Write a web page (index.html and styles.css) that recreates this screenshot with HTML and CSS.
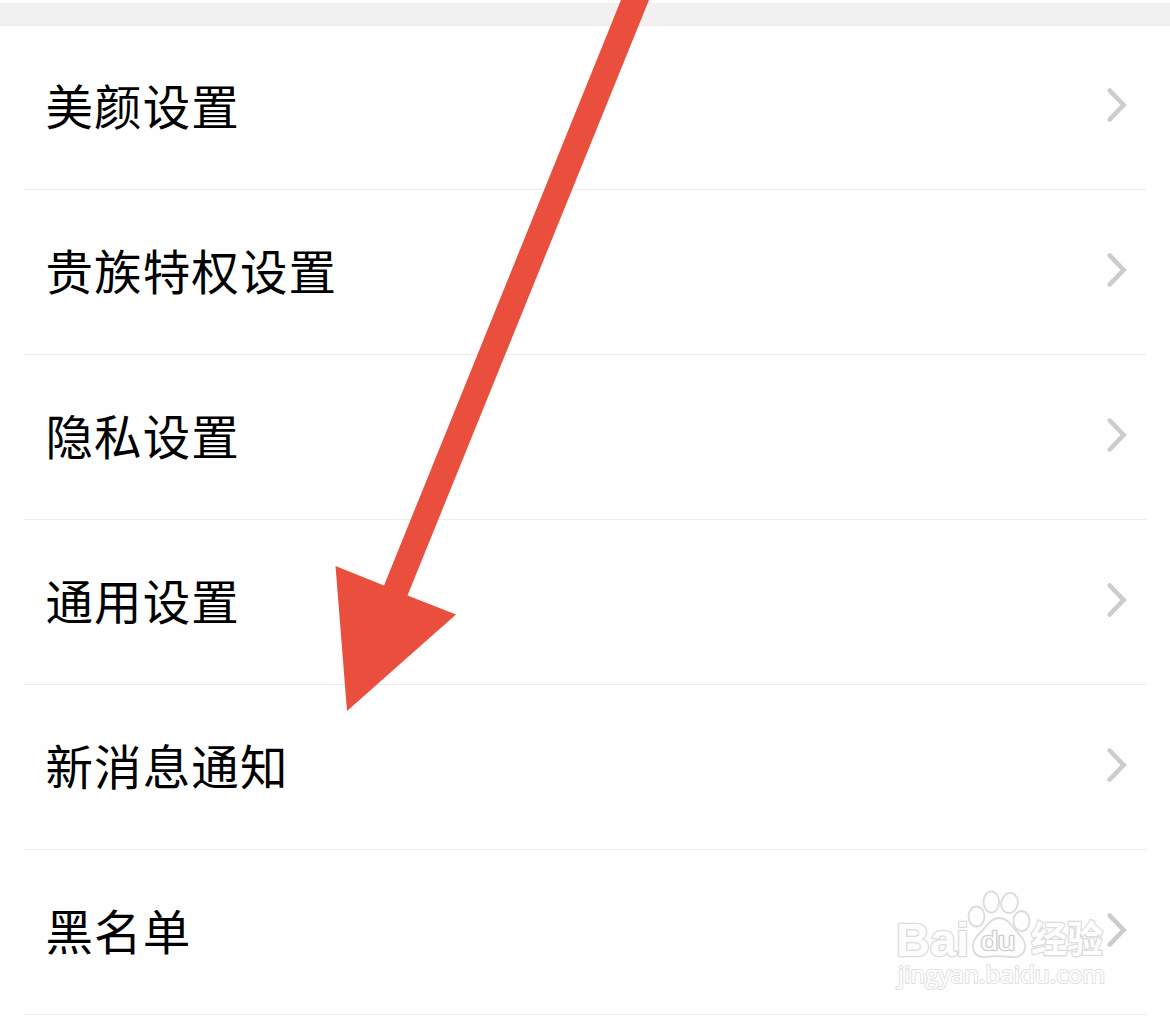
FILE: index.html
```
<!DOCTYPE html>
<html lang="zh-CN">
<head>
    <meta charset="UTF-8">
    <meta name="viewport" content="width=device-width, initial-scale=1.0">
    <title>设置</title>
    <link rel="stylesheet" href="styles.css">
</head>
<body>
    <div class="page">
        <div class="divider"></div>
        <ul class="settings">
            <li class="row">
                <span class="label">美颜设置</span>
                <svg class="chevron" viewBox="0 0 22 36"><path d="M3.7 3.5L17.6 18L3.7 32.5"/></svg>
            </li>
            <li class="row">
                <span class="label">贵族特权设置</span>
                <svg class="chevron" viewBox="0 0 22 36"><path d="M3.7 3.5L17.6 18L3.7 32.5"/></svg>
            </li>
            <li class="row">
                <span class="label">隐私设置</span>
                <svg class="chevron" viewBox="0 0 22 36"><path d="M3.7 3.5L17.6 18L3.7 32.5"/></svg>
            </li>
            <li class="row">
                <span class="label">通用设置</span>
                <svg class="chevron" viewBox="0 0 22 36"><path d="M3.7 3.5L17.6 18L3.7 32.5"/></svg>
            </li>
            <li class="row">
                <span class="label">新消息通知</span>
                <svg class="chevron" viewBox="0 0 22 36"><path d="M3.7 3.5L17.6 18L3.7 32.5"/></svg>
            </li>
            <li class="row">
                <span class="label">黑名单</span>
                <svg class="chevron" viewBox="0 0 22 36"><path d="M3.7 3.5L17.6 18L3.7 32.5"/></svg>
            </li>
        </ul>

        <svg class="arrow" viewBox="0 0 1170 1016">
            <path d="M621 0H649L407.5 595.5L456 614.5L347 711L335.5 566L384 585.5Z"/>
        </svg>

        <svg class="watermark" viewBox="0 0 230 116">
            <text class="brand" x="16" y="75.500" textLength="73" lengthAdjust="spacingAndGlyphs">Bai</text>
            <text class="brand-cn" x="151" y="72.500" textLength="72" lengthAdjust="spacingAndGlyphs">经验</text>
            <text class="site" x="18" y="102.500" textLength="207" lengthAdjust="spacingAndGlyphs">jingyan.baidu.com</text>
            <g class="paw">
                <ellipse cx="96.5" cy="36.5" rx="8" ry="10"/>
                <ellipse cx="111.3" cy="22" rx="7.8" ry="10.7"/>
                <ellipse cx="129.5" cy="23" rx="8.2" ry="10.2" transform="rotate(12 129.5 23)"/>
                <ellipse cx="141.5" cy="41" rx="8" ry="10"/>
                <path d="M118.5 38C111 38 107 46 102 51C95 57 92 62 93 68C94 75 99 77.5 106 77C112 76 124 76 130 77C138 78 144 75 145 68C146 60 140 56 136 51C131 45 128 38 118.5 38Z"/>
            </g>
            <text class="du" x="101" y="69.500" textLength="34" lengthAdjust="spacingAndGlyphs">du</text>
        </svg>
    </div>
</body>
</html>
```
FILE: styles.css
```
body {
    margin: 0;
    background-color: #fefefe;
    font-family: "Noto Sans CJK SC", sans-serif;
}
.page {
    position: relative;
    height: 1016px;
    padding-top: 3px;
    box-sizing: border-box;
    overflow: hidden;
}
.divider {
    height: 23px;
    margin-bottom: -1px;
    box-sizing: border-box;
    background-color: #f1f1f1;
    border-top: 1px solid #eeeeee;
    border-bottom: 1px solid #ececec;
}
.settings {
    list-style: none;
    margin: 0;
    padding: 0 24px;
}
.row {
    display: flex;
    align-items: center;
    justify-content: space-between;
    height: 165px;
    box-sizing: border-box;
    padding: 0 18px 4px 21.5px;
    border-bottom: 1px solid #ececec;
}
.label {
    font-size: 47.5px;
    line-height: 72px;
    letter-spacing: 1.1px;
    color: #000;
}
.chevron {
    width: 22px;
    height: 36px;
    fill: none;
    stroke: #cccccc;
    stroke-width: 4.6;
    stroke-linecap: round;
}
.arrow {
    position: absolute;
    top: 0;
    left: 0;
    width: 1170px;
    height: 1016px;
    fill: #ea4e3d;
}

/* watermark */
.watermark {
    position: absolute;
    left: 880px;
    top: 880px;
    width: 230px;
    height: 116px;
}
.watermark text {
    fill: #fefefe;
    stroke: #dcdcdc;
    stroke-width: 2.6;
    stroke-linejoin: round;
    paint-order: stroke;
}
.brand {
    font: bold 47px "Liberation Sans", sans-serif;
}
.brand-cn {
    font: 700 37px "Noto Sans CJK SC", sans-serif;
}
.site {
    font: 23px "Open Sans", sans-serif;
}
.watermark .site {
    stroke: #e2e2e2;
    stroke-width: 2;
}
.paw {
    fill: #fefefe;
    stroke: #dcdcdc;
    stroke-width: 1.8;
}
.du {
    font: 26px "Liberation Sans", sans-serif;
}
.watermark .du {
    stroke: #cfcfcf;
}
```
